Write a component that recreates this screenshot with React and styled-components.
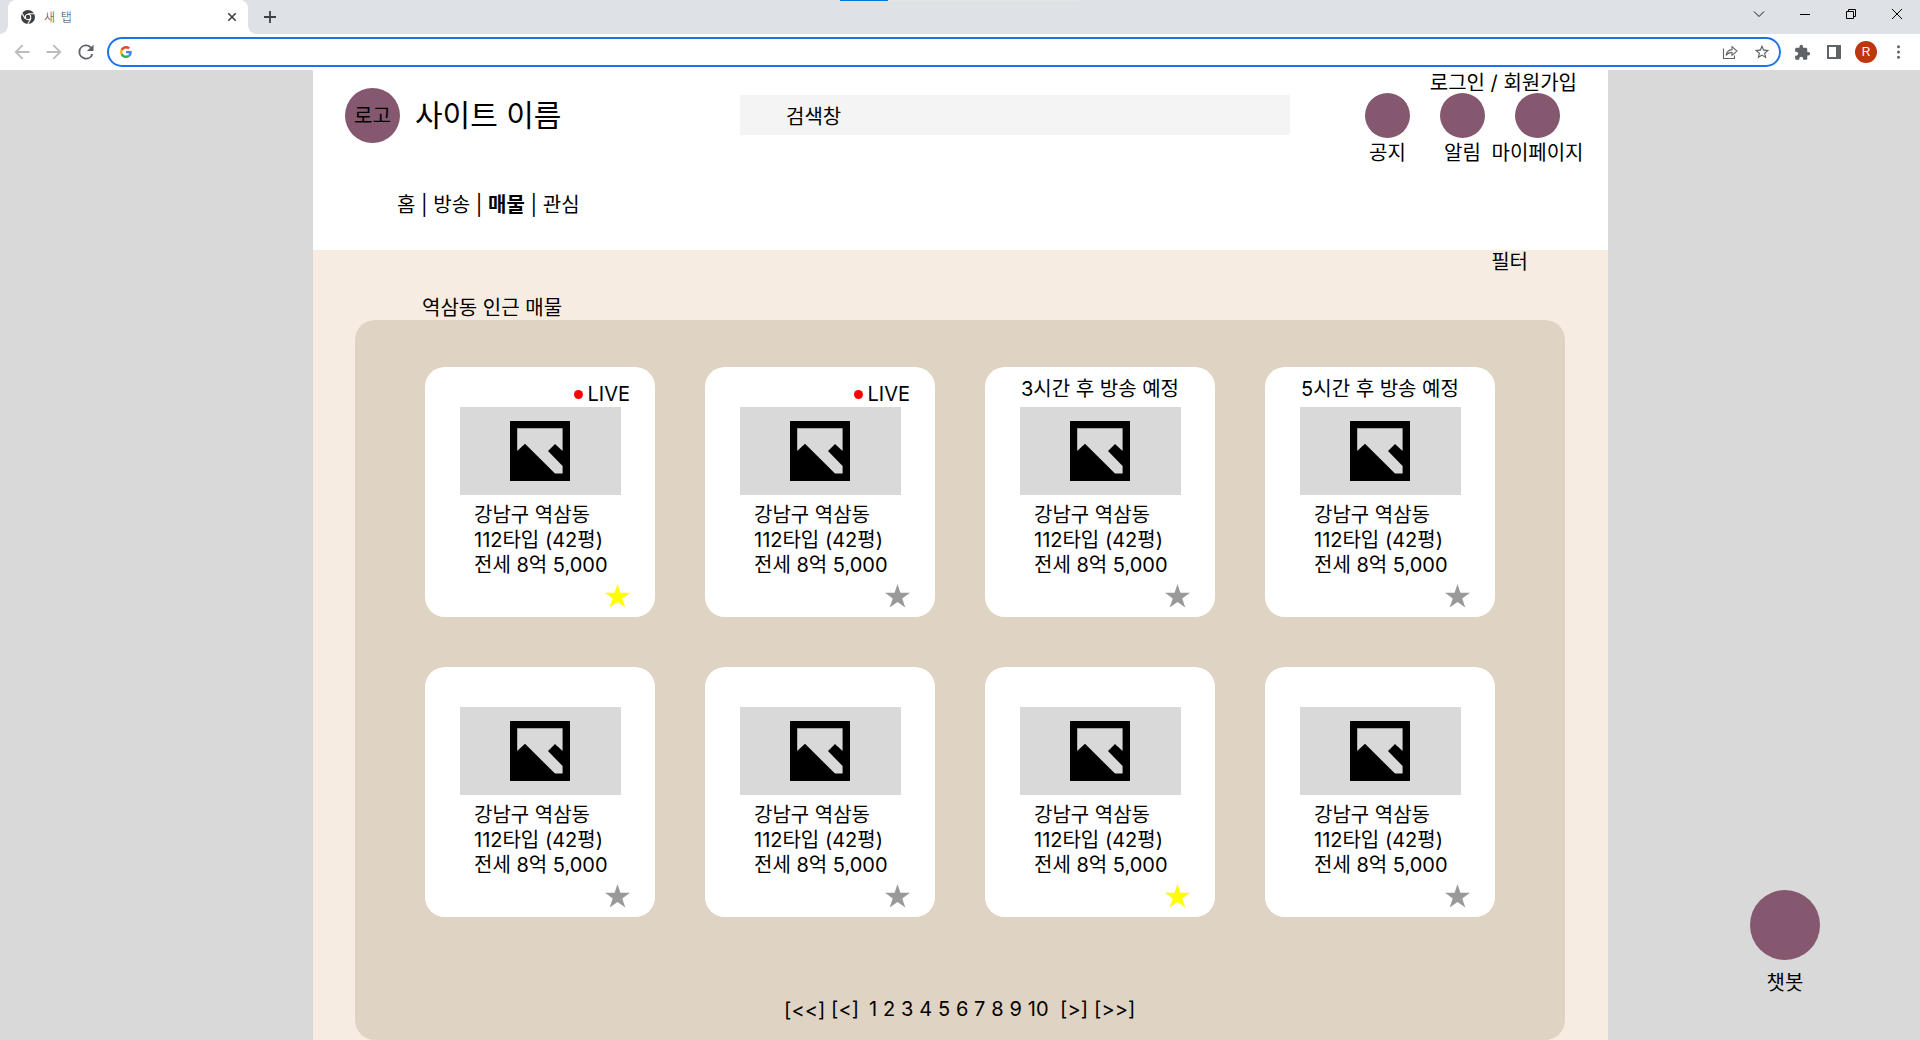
import React from "react";
import styled, { createGlobalStyle } from "styled-components";

const GlobalStyle = createGlobalStyle`
  * { box-sizing: border-box; }
  body {
    margin: 0;
    background: #d9d9d9;
    color: #000;
    font-family: Inter, "Noto Sans CJK KR", sans-serif;
    font-size: 20px;
    font-weight: 400;
    line-height: 25px;
    overflow: hidden;
  }
`;

const Window = styled.div`
  display: flex;
  flex-direction: column;
  width: 1920px;
  height: 1040px;
  overflow: hidden;
`;

/* ---------- browser frame ---------- */

const TabStrip = styled.div`
  position: relative;
  display: flex;
  flex: none;
  height: 34px;
  padding-left: 8px;
  background: #dee1e6;
`;

const TopStrip = styled.div`
  position: absolute;
  top: 0;
  left: 840px;
  width: 241px;
  height: 1px;
  background: linear-gradient(to right, #0078d7 48px, #e5e5e5 48px);
`;

const Tab = styled.div`
  position: relative;
  display: flex;
  align-items: center;
  width: 240px;
  height: 34px;
  padding: 0 12px 0 13px;
  border-radius: 8px 8px 0 0;
  background: #fff;
  &::before,
  &::after {
    content: "";
    position: absolute;
    bottom: 0;
    width: 8px;
    height: 8px;
  }
  &::before {
    left: -8px;
    background: radial-gradient(circle at 0 0, transparent 7.5px, #fff 8px);
  }
  &::after {
    right: -8px;
    background: radial-gradient(circle at 100% 0, transparent 7.5px, #fff 8px);
  }
`;

const TabTitle = styled.span`
  flex: 1;
  margin-left: 9px;
  font: 300 12px/16px "Noto Sans CJK KR", sans-serif;
  word-spacing: 3px;
  color: #3c4043;
`;

const NewTab = styled.div`
  display: flex;
  align-items: center;
  margin-left: 16px;
`;

const WindowButtons = styled.div`
  display: flex;
  align-items: flex-start;
  gap: 36px;
  margin-left: auto;
  padding: 9px 18px 0 0;
`;

const Toolbar = styled.div`
  display: flex;
  align-items: center;
  flex: none;
  height: 36px;
  padding-left: 14px;
  background: #fff;
`;

const NavButtons = styled.div`
  display: flex;
  gap: 16px;
  margin-right: 13px;
`;

const AddressBar = styled.div`
  display: flex;
  align-items: center;
  justify-content: space-between;
  width: 1674px;
  height: 30px;
  padding: 0 9px 0 11px;
  border: 2px solid #1a73e8;
  border-radius: 15px;
`;

const AddressActions = styled.div`
  display: flex;
  gap: 16px;
`;

const ToolbarActions = styled.div`
  display: flex;
  align-items: center;
  margin-left: 14px;
`;

const Avatar = styled.div`
  width: 22px;
  height: 22px;
  margin: 0 13px 0 14px;
  border-radius: 50%;
  background: #bf360c;
  color: #fff;
  font: 12px/22px "Liberation Sans", sans-serif;
  text-align: center;
`;

const Icon = styled.svg`
  display: block;
  flex: none;
  width: ${(p) => p.$w || 16}px;
  height: ${(p) => p.$h || p.$w || 16}px;
  margin-left: ${(p) => p.$ml || 0}px;
  overflow: visible;
`;

/* ---------- page ---------- */

const Page = styled.div`
  display: grid;
  grid-template-columns: 313px 1295px 1fr;
  height: 970px;
`;

const Site = styled.main`
  grid-column: 2;
  display: flex;
  flex-direction: column;
  background: #f7ece1;
`;

const Header = styled.header`
  height: 180px;
  padding: 0 26px 0 32px;
  background: #fff;
`;

const HeaderTop = styled.div`
  display: flex;
  align-items: flex-start;
  height: 123px;
`;

const Disc = styled.div`
  flex: none;
  width: ${(p) => p.$size}px;
  height: ${(p) => p.$size}px;
  border-radius: 50%;
  background: #86586f;
  line-height: ${(p) => p.$size + 1}px;
  text-align: center;
`;

const Brand = styled.div`
  display: flex;
  align-items: center;
  gap: 15px;
  width: 395px;
  margin-top: 18px;
`;

const SiteName = styled.h1`
  margin: 0;
  padding-bottom: 2px;
  font-size: 30px;
  font-weight: inherit;
  line-height: 40px;
`;

const Search = styled.div`
  width: 550px;
  height: 40px;
  margin-top: 25px;
  padding-left: 46px;
  background: #f4f4f4;
  line-height: 44px;
`;

const Account = styled.div`
  margin-left: auto;
  width: 220px;
`;

const AccountLinks = styled.div`
  height: 23px;
  padding-right: 5px;
  line-height: 27px;
  text-align: right;
`;

const Shortcuts = styled.div`
  display: grid;
  grid-template-columns: 75px 75px 75px;
  margin-left: -12px;
`;

const Shortcut = styled.div`
  display: flex;
  flex-direction: column;
  align-items: center;
  gap: 3px;
  white-space: nowrap;
`;

const Menu = styled.nav`
  padding: 0 0 0 52px;
  white-space: pre;
`;

const Current = styled.b`
  font-weight: 700;
`;

const ListHead = styled.div`
  display: flex;
  justify-content: space-between;
  align-items: flex-start;
  height: 70px;
  padding: 0 80px 0 109px;
`;

const ListTitle = styled.h2`
  margin: 46px 0 0;
  font-size: 20px;
  font-weight: inherit;
`;

const Panel = styled.section`
  display: flex;
  flex-direction: column;
  align-items: center;
  flex: none;
  width: 1210px;
  height: 720px;
  margin-left: 42px;
  padding-top: 47px;
  border-radius: 20px;
  background: #dfd3c3;
`;

const Cards = styled.div`
  display: grid;
  grid-template-columns: repeat(4, 230px);
  grid-auto-rows: 250px;
  gap: 50px;
`;

const Card = styled.article`
  display: flex;
  flex-direction: column;
  padding: 0 25px 0 35px;
  border-radius: 20px;
  background: #fff;
`;

const Status = styled.div`
  display: flex;
  align-items: center;
  justify-content: ${(p) => (p.$live ? "flex-end" : "center")};
  gap: 5px;
  height: 40px;
  padding-top: ${(p) => (p.$live ? 14 : 4)}px;
  padding-right: ${(p) => (p.$live ? 0 : 10)}px;
  white-space: nowrap;
`;

const LiveDot = styled.i`
  width: 9px;
  height: 9px;
  border-radius: 50%;
  background: #f00;
`;

const Photo = styled.div`
  display: flex;
  justify-content: center;
  align-items: center;
  flex: none;
  width: 161px;
  height: 88px;
  padding-right: 1px;
  background: #d9d9d9;
`;

const Details = styled.div`
  margin: 8px 0 0 14px;
  white-space: pre;
`;

const Favorite = styled.div`
  display: flex;
  justify-content: flex-end;
  margin-top: 6px;
`;

const Pager = styled.div`
  display: grid;
  grid-template-columns: 47px 38px 191px 34px 42px;
  margin-top: 80px;
  letter-spacing: 0.1px;
  white-space: nowrap;
`;

const PageJump = styled.span`
  padding-top: ${(p) => (p.$low ? 1 : 0)}px;
`;

const Chatbot = styled.aside`
  display: flex;
  flex-direction: column;
  align-items: center;
  justify-self: end;
  gap: 11px;
  margin: 820px 100px 0 0;
`;

/* ---------- drawings ---------- */

const Image = () => (
  <Icon $w={60} viewBox="0 0 60 60">
    <path
      fillRule="evenodd"
      d="M0 0H60V60H0ZM7.2 7.2V30L15 22.8L45 52.6H52.6V45L38 30L45 23L52.6 30V7.2Z"
    />
  </Icon>
);

const Star = ({ on }) => (
  <Icon $w={25} $h={24} viewBox="0 0 25 24">
    <path
      fill={on ? "#ffff00" : "#999999"}
      d="M12.5 0L15.4 8.8H25L17.3 14.4L20.3 23.6L12.5 18L4.7 23.6L7.7 14.4L0 8.8H9.6Z"
    />
  </Icon>
);

const Chrome = () => (
  <Icon $w={14} viewBox="0 0 14 14">
    <circle cx="7" cy="7" r="7" fill="#3c4043" />
    <circle cx="7" cy="7" r="2.75" fill="#3c4043" stroke="#fff" strokeWidth="1.1" />
    <path d="M7 3.7H13.2M4.1 8.6L1 3.3M9.9 8.6L6.8 14" stroke="#fff" strokeWidth="1.1" fill="none" />
  </Icon>
);

const Google = () => (
  <Icon $w={12} viewBox="0 0 48 48">
    <path fill="#EA4335" d="M24 9.5c3.54 0 6.71 1.22 9.21 3.6l6.85-6.85C35.9 2.38 30.47 0 24 0 14.62 0 6.51 5.38 2.56 13.22l7.98 6.19C12.43 13.72 17.74 9.5 24 9.5z" />
    <path fill="#4285F4" d="M46.98 24.55c0-1.57-.15-3.09-.38-4.55H24v9.02h12.94c-.58 2.96-2.26 5.48-4.78 7.18l7.73 6c4.51-4.18 7.09-10.36 7.09-17.65z" />
    <path fill="#FBBC05" d="M10.53 28.59c-.48-1.45-.76-2.99-.76-4.59s.27-3.14.76-4.59l-7.98-6.19C.92 16.46 0 20.12 0 24c0 3.88.92 7.54 2.56 10.78l7.97-6.19z" />
    <path fill="#34A853" d="M24 48c6.48 0 11.93-2.13 15.89-5.81l-7.73-6c-2.15 1.45-4.92 2.3-8.16 2.3-6.26 0-11.57-4.22-13.47-9.91l-7.98 6.19C6.51 42.62 14.62 48 24 48z" />
  </Icon>
);

const BrowserFrame = () => (
  <>
    <TabStrip>
      <TopStrip />
      <Tab>
        <Chrome />
        <TabTitle>새 탭</TabTitle>
        <Icon $w={8} viewBox="0 0 8 8">
          <path d="M.3 .3L7.7 7.7M7.7 .3L.3 7.7" stroke="#3c4043" strokeWidth="1.6" />
        </Icon>
      </Tab>
      <NewTab>
        <Icon $w={12} viewBox="0 0 12 12">
          <path d="M6 0V12M0 6H12" stroke="#3c4043" strokeWidth="1.8" />
        </Icon>
      </NewTab>
      <WindowButtons>
        <Icon $w={10} viewBox="0 0 10 10">
          <path d="M0 2.5L5 7.5L10 2.5" stroke="#111" fill="none" />
        </Icon>
        <Icon $w={10} viewBox="0 0 10 10">
          <path d="M0 5.5H10" stroke="#000" />
        </Icon>
        <Icon $w={10} viewBox="0 0 10 10">
          <path d="M.5 2.5H7.5V9.5H.5ZM2.5 2.5V.5H9.5V7.5H7.5" stroke="#000" fill="none" />
        </Icon>
        <Icon $w={10} viewBox="0 0 10 10">
          <path d="M0 0L10 10M10 0L0 10" stroke="#000" />
        </Icon>
      </WindowButtons>
    </TabStrip>
    <Toolbar>
      <NavButtons>
        <Icon viewBox="3.5 3.5 17 17">
          <path fill="#babcbe" d="M20 11H7.83l5.59-5.59L12 4l-8 8 8 8 1.41-1.41L7.83 13H20z" />
        </Icon>
        <Icon viewBox="3.5 3.5 17 17">
          <path fill="#babcbe" d="M12 4l-1.41 1.41L16.17 11H4v2h12.17l-5.58 5.59L12 20l8-8z" />
        </Icon>
        <Icon viewBox="3.5 3.5 17 17">
          <path fill="#5f6368" d="M17.65 6.35A7.96 7.96 0 0 0 12 4a8 8 0 1 0 7.73 10h-2.08A6 6 0 1 1 12 6c1.66 0 3.14.69 4.22 1.78L13 11h7V4z" />
        </Icon>
      </NavButtons>
      <AddressBar>
        <Google />
        <AddressActions>
          <Icon viewBox="0 0 16 16">
            <path
              d="M1.5 4.5V14.5H12.5V11.5M4 11.3C4.8 7.6 7 5.8 10 5.6V2.6L15 7L10 11.3V8.4C7.6 8.4 5.6 9.4 4 11.3Z"
              fill="none"
              stroke="#5f6368"
              strokeWidth="1.1"
            />
          </Icon>
          <Icon viewBox="1 1 22 22">
            <path fill="#5f6368" d="M22 9.24l-7.19-.62L12 2 9.19 8.63 2 9.24l5.46 4.73L5.82 21 12 17.27 18.18 21l-1.63-7.03L22 9.24zM12 15.4l-3.76 2.27 1-4.28-3.32-2.88 4.38-.38L12 6.1l1.71 4.04 4.38.38-3.32 2.88 1 4.28L12 15.4z" />
          </Icon>
        </AddressActions>
      </AddressBar>
      <ToolbarActions>
        <Icon $w={15} viewBox="1.8 1.2 21 21">
          <path fill="#5f6368" d="M20.5 11H19V7c0-1.1-.9-2-2-2h-4V3.5a2.5 2.5 0 0 0-5 0V5H4c-1.1 0-1.99.9-1.99 2v3.8H3.5c1.49 0 2.7 1.21 2.7 2.7s-1.21 2.7-2.7 2.7H2V20c0 1.1.9 2 2 2h3.8v-1.5c0-1.49 1.21-2.7 2.7-2.7s2.7 1.21 2.7 2.7V22H17c1.1 0 2-.9 2-2v-4h1.5a2.5 2.5 0 0 0 0-5z" />
        </Icon>
        <Icon $w={14} $ml={17} viewBox="0 0 14 14">
          <path fill="#5f6368" fillRule="evenodd" d="M0 0H14V14H0ZM2 2V12H9V2Z" />
        </Icon>
        <Avatar>R</Avatar>
        <Icon $w={16} viewBox="0 0 16 16">
          <g fill="#5f6368">
            <circle cx="8.5" cy="2.8" r="1.5" />
            <circle cx="8.5" cy="8" r="1.5" />
            <circle cx="8.5" cy="13.2" r="1.5" />
          </g>
        </Icon>
      </ToolbarActions>
    </Toolbar>
  </>
);

const listings = [
  { live: true, favorite: true },
  { live: true },
  { notice: "3시간 후 방송 예정" },
  { notice: "5시간 후 방송 예정" },
  {},
  {},
  { favorite: true },
  {},
];

const Listing = ({ live, notice, favorite }) => (
  <Card>
    <Status $live={live}>
      {live && <LiveDot />}
      {live ? "LIVE" : notice}
    </Status>
    <Photo>
      <Image />
    </Photo>
    <Details>{"강남구 역삼동\n112타입 (42평)\n전세 8억 5,000"}</Details>
    <Favorite>
      <Star on={favorite} />
    </Favorite>
  </Card>
);

export default function App() {
  return (
    <Window>
      <GlobalStyle />
      <BrowserFrame />
      <Page>
        <Site>
          <Header>
            <HeaderTop>
              <Brand>
                <Disc $size={55}>로고</Disc>
                <SiteName>사이트 이름</SiteName>
              </Brand>
              <Search>검색창</Search>
              <Account>
                <AccountLinks>로그인 / 회원가입</AccountLinks>
                <Shortcuts>
                  {["공지", "알림", "마이페이지"].map((label) => (
                    <Shortcut key={label}>
                      <Disc $size={45} />
                      {label}
                    </Shortcut>
                  ))}
                </Shortcuts>
              </Account>
            </HeaderTop>
            <Menu>
              홈 | 방송 | <Current>매물</Current> | 관심
            </Menu>
          </Header>
          <ListHead>
            <ListTitle>역삼동 인근 매물</ListTitle>
            <span>필터</span>
          </ListHead>
          <Panel>
            <Cards>
              {listings.map((item, i) => (
                <Listing key={i} {...item} />
              ))}
            </Cards>
            <Pager>
              <PageJump $low>{"[<<]"}</PageJump>
              <PageJump>{"[<]"}</PageJump>
              <span>1 2 3 4 5 6 7 8 9 10</span>
              <PageJump>{"[>]"}</PageJump>
              <PageJump>{"[>>]"}</PageJump>
            </Pager>
          </Panel>
        </Site>
        <Chatbot>
          <Disc $size={70} />
          챗봇
        </Chatbot>
      </Page>
    </Window>
  );
}
